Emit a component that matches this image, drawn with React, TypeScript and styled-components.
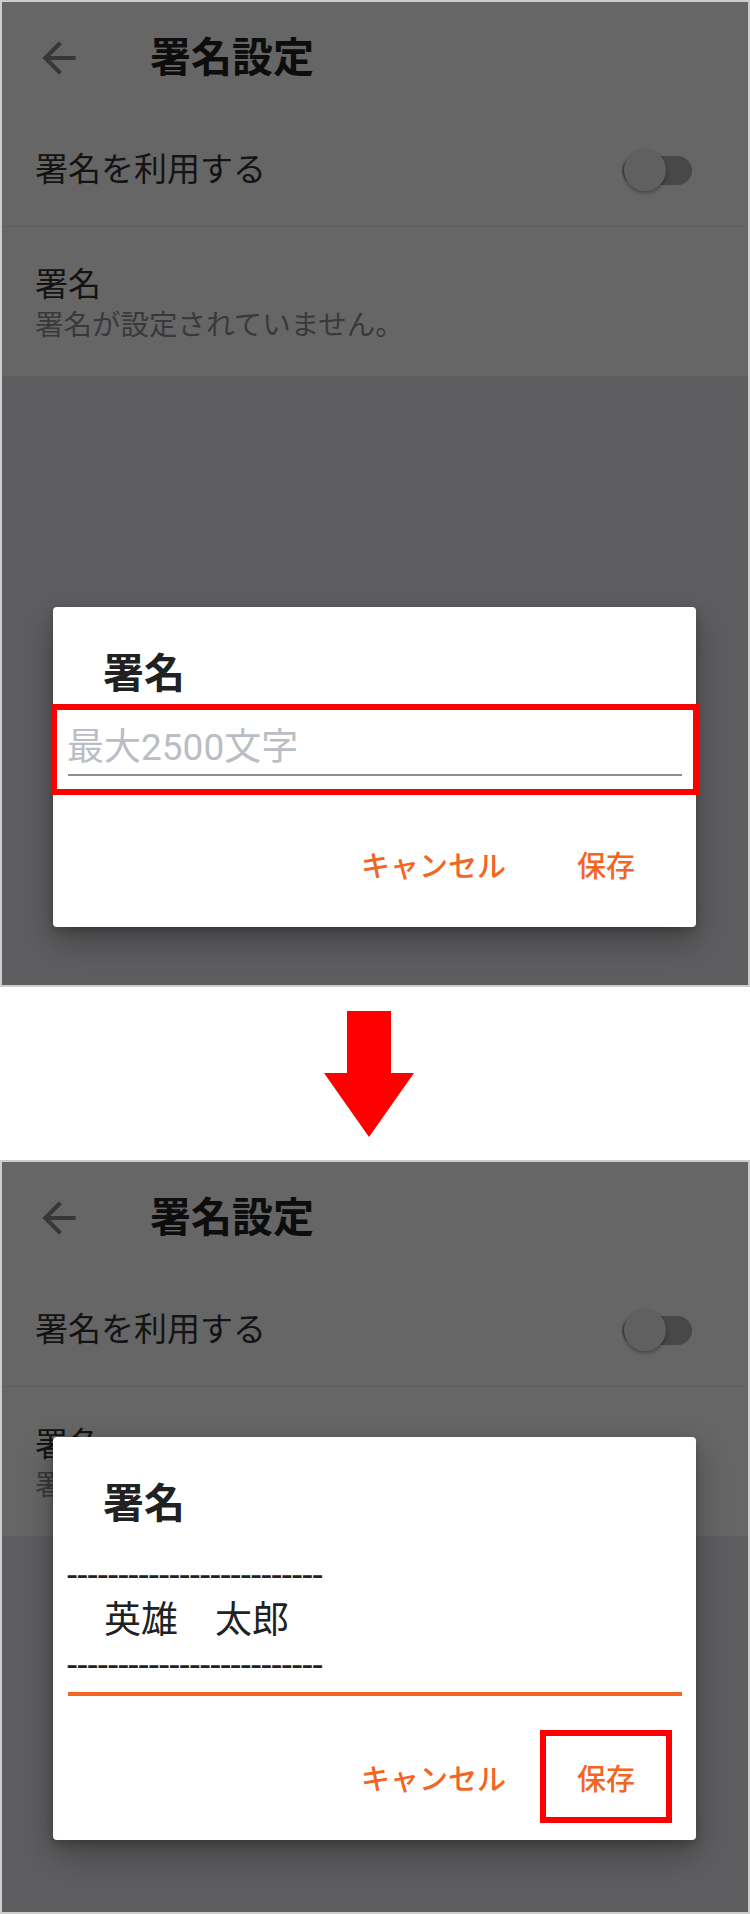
import styled, { createGlobalStyle } from 'styled-components'

const ORANGE = '#f26522'

const GlobalStyle = createGlobalStyle`
  body {
    margin: 0;
    background: #ffffff;
    font-family: Roboto, "Noto Sans CJK JP", sans-serif;
  }
`

const DASHES = '-------------------------'

const Page = styled.div`
  width: 750px;
  display: flex;
  flex-direction: column;
`

const Panel = styled.div<{ $height: number }>`
  position: relative;
  box-sizing: border-box;
  height: ${({ $height }) => $height}px;
  border: 2px solid #cdcdcd;
  background: #ececf0;
  overflow: hidden;
`

const Sheet = styled.div`
  background: #ffffff;
`

const Header = styled.div`
  height: 112px;
  display: flex;
  align-items: center;
  gap: 66px;
  padding-left: 32px;
`

const Title = styled.h1`
  margin: 0;
  font-size: 41px;
  line-height: 1;
  font-weight: 700;
  color: #212121;
`

const SwitchRow = styled.div`
  height: 112px;
  display: flex;
  align-items: center;
  justify-content: space-between;
  padding: 0 56px 0 33px;
  border-bottom: 1px solid #eeeeee;
`

const RowLabel = styled.div`
  font-size: 33px;
  line-height: 44px;
  color: #333333;
`

const RowSub = styled.div`
  font-size: 28.5px;
  line-height: 37px;
  color: #909096;
`

const InfoRow = styled.div`
  display: flex;
  flex-direction: column;
  padding: 36px 33px 32px;
`

const Toggle = styled.div`
  position: relative;
  width: 70px;
  height: 29px;
  border-radius: 15px;
  background: #b4b4b4;
`

const Thumb = styled.span`
  position: absolute;
  left: 2px;
  top: -6.5px;
  width: 42px;
  height: 42px;
  border-radius: 50%;
  background: #f1f1f1;
  box-shadow: 0 2px 4px rgba(0, 0, 0, 0.35);
`

const Scrim = styled.div`
  position: absolute;
  inset: 0;
  background: rgba(0, 0, 0, 0.6);
`

const Dialog = styled.div<{ $top: number }>`
  position: absolute;
  left: 51px;
  top: ${({ $top }) => $top}px;
  width: 643px;
  background: #ffffff;
  border-radius: 4px;
  box-shadow: 0 14px 34px rgba(0, 0, 0, 0.3), 0 4px 8px rgba(0, 0, 0, 0.2);
`

const DialogTitle = styled.h2`
  margin: 0;
  padding: 40px 0 0 50px;
  font-size: 41px;
  line-height: 55px;
  font-weight: 700;
  color: #212121;
`

const Field = styled.div<{ $focused?: boolean; $marked?: boolean }>`
  margin: 8px 3px 0 4px;
  padding: ${({ $focused }) => ($focused ? '13px 11px 6px 10px' : '16px 11px 13px 10px')};
  outline: ${({ $marked }) => ($marked ? '6px solid #ff0000' : 'none')};
`

const FieldText = styled.div<{ $placeholder?: boolean }>`
  font-size: 37px;
  line-height: ${({ $placeholder }) => ($placeholder ? 44 : 45)}px;
  color: ${({ $placeholder }) => ($placeholder ? '#babdc5' : '#212121')};
  white-space: pre;
`

const Underline = styled.div<{ $focused?: boolean }>`
  margin: 4px 0 0 1px;
  height: ${({ $focused }) => ($focused ? 4 : 2)}px;
  background: ${({ $focused }) => ($focused ? ORANGE : '#8e8e8e')};
`

const Actions = styled.div`
  display: flex;
  justify-content: flex-end;
  gap: 9px;
  margin-top: 34px;
  padding: 0 30px 23px 0;
`

const ActionButton = styled.button<{ $marked?: boolean }>`
  height: 81px;
  padding: 0 31px;
  border: none;
  background: transparent;
  font-family: inherit;
  font-size: 29px;
  font-weight: 500;
  color: ${ORANGE};
  outline: ${({ $marked }) => ($marked ? '6px solid #ff0000' : 'none')};
`

const ArrowArea = styled.div`
  box-sizing: border-box;
  height: 173px;
  padding: 24px 0 0 324px;
`

const BackIcon = () => (
  <svg width="50" height="50" viewBox="0 0 24 24" fill="#8a8a8a">
    <path d="M20 11H7.83l5.59-5.59L12 4l-8 8 8 8 1.41-1.41L7.83 13H20v-2z" />
  </svg>
)

const DownArrow = () => (
  <svg width="90" height="126" viewBox="0 0 90 126">
    <polygon points="23,0 67,0 67,62 90,62 45,126 0,62 23,62" fill="#ff0000" />
  </svg>
)

const SettingsScreen = () => (
  <Sheet>
    <Header>
      <BackIcon />
      <Title>署名設定</Title>
    </Header>
    <SwitchRow>
      <RowLabel>署名を利用する</RowLabel>
      <Toggle>
        <Thumb />
      </Toggle>
    </SwitchRow>
    <InfoRow>
      <RowLabel>署名</RowLabel>
      <RowSub>署名が設定されていません。</RowSub>
    </InfoRow>
  </Sheet>
)

const App = () => {
  return (
    <Page>
      <GlobalStyle />
      <Panel $height={987}>
        <SettingsScreen />
        <Scrim />
        <Dialog $top={605}>
          <DialogTitle>署名</DialogTitle>
          <Field $marked>
            <FieldText $placeholder>最大2500文字</FieldText>
            <Underline />
          </Field>
          <Actions>
            <ActionButton>キャンセル</ActionButton>
            <ActionButton>保存</ActionButton>
          </Actions>
        </Dialog>
      </Panel>

      <ArrowArea>
        <DownArrow />
      </ArrowArea>

      <Panel $height={754}>
        <SettingsScreen />
        <Scrim />
        <Dialog $top={275}>
          <DialogTitle>署名</DialogTitle>
          <Field $focused>
            <FieldText>{DASHES}</FieldText>
            <FieldText>　英雄　太郎</FieldText>
            <FieldText>{DASHES}</FieldText>
            <Underline $focused />
          </Field>
          <Actions>
            <ActionButton>キャンセル</ActionButton>
            <ActionButton $marked>保存</ActionButton>
          </Actions>
        </Dialog>
      </Panel>
    </Page>
  )
}

export default App
